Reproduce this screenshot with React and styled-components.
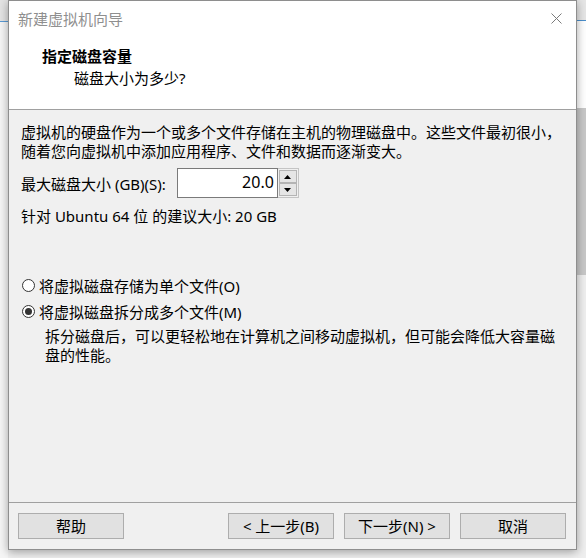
import React from "react";
import styled, { createGlobalStyle } from "styled-components";

const GlobalStyle = createGlobalStyle`
  body {
    margin: 0;
    background: #f0f0f0;
    font-family: "Noto Sans", "Noto Sans CJK SC", sans-serif;
  }
`;

const Desktop = styled.div`
  display: flex;
  width: 586px;
  height: 558px;
  overflow: hidden;
  background: #f0f0f0;
`;

const LeftStrip = styled.div`
  width: 8px;
  flex: none;
  background: linear-gradient(
    to bottom,
    #e4e4e4 0 21px,
    #5b9bd5 21px 22px,
    #f6f6f6 22px
  );
`;

const RightStrip = styled.div`
  flex: 1;
  background: linear-gradient(
    to bottom,
    #e6e6e6 0 20px,
    #4a8fcc 20px 21px,
    #ffffff 21px 108px,
    #c8c8c8 108px 275px,
    #efefef 275px
  );
`;

const Dialog = styled.div`
  position: relative;
  z-index: 1;
  display: flex;
  flex-direction: column;
  width: 569px;
  height: 550px;
  box-sizing: border-box;
  border: 1px solid #8e8e8e;
  background: #f0f0f0;
  box-shadow: 0 2px 9px rgba(0, 0, 0, 0.35);
  font-size: 15px;
  color: #000;
`;

const TopArea = styled.div`
  height: 108px;
  background: #fff;
  border-bottom: 1px solid #a0a0a0;
`;

const TitleBar = styled.div`
  display: flex;
  align-items: center;
  justify-content: space-between;
  height: 35px;
  padding: 0 14px 0 9px;
`;

const Title = styled.span`
  color: #8f8f8f;
  line-height: 20px;
`;

const CloseIcon = () => (
  <svg width="11" height="11" viewBox="0 0 11 11">
    <path d="M0.5 0.5L10.5 10.5M10.5 0.5L0.5 10.5" stroke="#7a7a7a" strokeWidth="1" fill="none" />
  </svg>
);

const Header = styled.div`
  padding-top: 10px;
`;

const HeaderTitle = styled.div`
  padding-left: 33px;
  font-weight: bold;
  line-height: 20px;
`;

const HeaderSub = styled.div`
  margin-top: 2px;
  padding-left: 65px;
  line-height: 20px;
`;

const Body = styled.div`
  flex: 1;
  padding: 13px 12px 0 12px;
`;

const Paragraph = styled.p`
  margin: 0;
  line-height: 19px;
  white-space: nowrap;
`;

const SizeRow = styled.div`
  display: flex;
  align-items: center;
  gap: 11px;
  margin-top: 7px;
  height: 30px;
`;

const SpinBox = styled.div`
  display: flex;
  height: 30px;
`;

const TextField = styled.div`
  box-sizing: border-box;
  width: 101px;
  height: 30px;
  border: 1px solid #7a7a7a;
  background: #fff;
  text-align: right;
  padding-right: 3px;
  font-size: 16px;
  line-height: 27px;
`;

const SpinButtons = styled.div`
  display: flex;
  flex-direction: column;
  justify-content: space-between;
  box-sizing: border-box;
  width: 21px;
  height: 30px;
  padding: 1px;
  border: 1px solid #c4c4c4;
  border-left: none;
  background: #f0f0f0;
`;

const SpinButton = styled.div`
  display: flex;
  align-items: center;
  justify-content: center;
  box-sizing: border-box;
  height: 13px;
  border: 1px solid #b4b4b4;
  background: #e5e5e5;
`;

const Arrow = ({ up }) => (
  <svg width="7" height="4" viewBox="0 0 7 4">
    <path d={up ? "M0 4L3.5 0L7 4Z" : "M0 0L3.5 4L7 0Z"} fill="#000" />
  </svg>
);

const Hint = styled(Paragraph)`
  margin-top: 9px;
`;

const Options = styled.div`
  display: flex;
  flex-direction: column;
  gap: 6px;
  margin-top: 49px;
`;

const RadioRow = styled.label`
  display: flex;
  align-items: center;
  gap: 4px;
  height: 20px;
  padding-left: 1px;
`;

const RadioCircle = styled.span`
  display: flex;
  align-items: center;
  justify-content: center;
  box-sizing: border-box;
  width: 13px;
  height: 13px;
  border: 1px solid #333;
  border-radius: 50%;
  background: #fff;

  &::after {
    content: "";
    display: ${({ checked }) => (checked ? "block" : "none")};
    width: 7px;
    height: 7px;
    border-radius: 50%;
    background: #333;
  }
`;

const Description = styled(Paragraph)`
  margin-top: 6px;
  padding-left: 24px;
`;

const Footer = styled.div`
  display: flex;
  justify-content: space-between;
  padding: 10px 10px 10px 9px;
  border-top: 1px solid #a0a0a0;
`;

const ButtonGroup = styled.div`
  display: flex;
  gap: 10px;
`;

const Button = styled.button`
  box-sizing: border-box;
  width: 106px;
  height: 26px;
  padding: 0;
  border: 1px solid #adadad;
  background: #e1e1e1;
  font-family: inherit;
  font-size: 15px;
  color: #000;
  line-height: 22px;
`;

export default function App() {
  return (
    <>
      <GlobalStyle />
      <Desktop>
        <LeftStrip />
        <Dialog>
          <TopArea>
            <TitleBar>
              <Title>新建虚拟机向导</Title>
              <CloseIcon />
            </TitleBar>
            <Header>
              <HeaderTitle>指定磁盘容量</HeaderTitle>
              <HeaderSub>磁盘大小为多少?</HeaderSub>
            </Header>
          </TopArea>
          <Body>
            <Paragraph>
              虚拟机的硬盘作为一个或多个文件存储在主机的物理磁盘中。这些文件最初很小，
              <br />
              随着您向虚拟机中添加应用程序、文件和数据而逐渐变大。
            </Paragraph>
            <SizeRow>
              <span>最大磁盘大小 (GB)(S):</span>
              <SpinBox>
                <TextField>20.0</TextField>
                <SpinButtons>
                  <SpinButton>
                    <Arrow up />
                  </SpinButton>
                  <SpinButton>
                    <Arrow />
                  </SpinButton>
                </SpinButtons>
              </SpinBox>
            </SizeRow>
            <Hint>针对 Ubuntu 64 位 的建议大小: 20 GB</Hint>
            <Options>
              <RadioRow>
                <RadioCircle />
                将虚拟磁盘存储为单个文件(O)
              </RadioRow>
              <RadioRow>
                <RadioCircle checked />
                将虚拟磁盘拆分成多个文件(M)
              </RadioRow>
            </Options>
            <Description>
              拆分磁盘后，可以更轻松地在计算机之间移动虚拟机，但可能会降低大容量磁
              <br />
              盘的性能。
            </Description>
          </Body>
          <Footer>
            <Button>帮助</Button>
            <ButtonGroup>
              <Button>&lt; 上一步(B)</Button>
              <Button>下一步(N) &gt;</Button>
              <Button>取消</Button>
            </ButtonGroup>
          </Footer>
        </Dialog>
        <RightStrip />
      </Desktop>
    </>
  );
}
